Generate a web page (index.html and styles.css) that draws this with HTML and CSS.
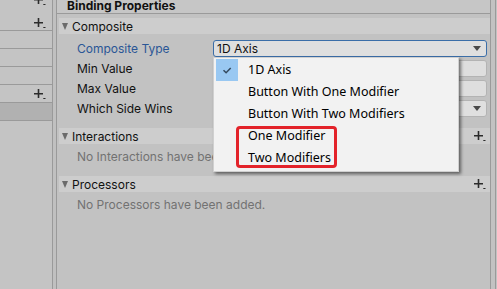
FILE: index.html
```html
<!DOCTYPE html>
<html>
<head>
<meta charset="utf-8">
<link rel="stylesheet" href="styles.css">
</head>
<body>
<div class="app">
  <div class="left">
    <div class="ltop">
      <svg class="plus plus-cut" viewBox="0 0 12 11"><path d="M0 4h9v1.6H0z M3.7 0h1.6v9H3.7z M9.3 9h2.2v1H9.3z" fill="#2b2b2b"/></svg>
      <svg class="plus plus-top" viewBox="0 0 12 11"><path d="M0 4h9v1.6H0z M3.7 0h1.6v9H3.7z M9.3 9h2.2v1H9.3z" fill="#2b2b2b"/></svg>
    </div>
    <div class="lrow"></div>
    <div class="lrow"></div>
    <div class="lrow"></div>
    <div class="lrow"><svg class="plus" viewBox="0 0 12 11"><path d="M0 4h9v1.6H0z M3.7 0h1.6v9H3.7z M9.3 9h2.2v1H9.3z" fill="#2b2b2b"/></svg></div>
    <div class="lrow sel"></div>
  </div>
  <div class="gap"></div>
  <div class="main">
    <div class="title">Binding Properties</div>

    <div class="fold fold-first">
      <span class="tri"></span><span class="fold-name">Composite</span>
    </div>
    <div class="fields">
      <div class="row">
        <span class="label active">Composite Type</span>
        <div class="field dropdown focused"><span>1D Axis</span><span class="arrow"></span></div>
      </div>
      <div class="row">
        <span class="label">Min Value</span>
        <div class="field"></div>
      </div>
      <div class="row">
        <span class="label">Max Value</span>
        <div class="field"></div>
      </div>
      <div class="row">
        <span class="label">Which Side Wins</span>
        <div class="field dropdown"><span></span><span class="arrow"></span></div>
      </div>
    </div>

    <div class="fold fold-sec">
      <span class="tri"></span><span class="fold-name">Interactions</span>
      <svg class="plus addbtn" viewBox="0 0 12 11"><path d="M0 4h9v1.6H0z M3.7 0h1.6v9H3.7z M9.3 9h2.2v1H9.3z" fill="#2b2b2b"/></svg>
    </div>
    <div class="empty">No Interactions have been added.</div>

    <div class="fold fold-sec2">
      <span class="tri"></span><span class="fold-name">Processors</span>
      <svg class="plus addbtn" viewBox="0 0 12 11"><path d="M0 4h9v1.6H0z M3.7 0h1.6v9H3.7z M9.3 9h2.2v1H9.3z" fill="#2b2b2b"/></svg>
    </div>
    <div class="empty">No Processors have been added.</div>
  </div>
  <div class="vbar"></div>
  <div class="edge"></div>

  <div class="menu">
    <div class="item checked">
      <span class="check"><svg viewBox="0 0 22 22"><path d="M7.5 11.2l2.6 2.6 4.6-4.8" fill="none" stroke="#34495e" stroke-width="1.5"/></svg></span>
      <span class="itext">1D Axis</span>
    </div>
    <div class="item"><span class="check"></span><span class="itext">Button With One Modifier</span></div>
    <div class="item"><span class="check"></span><span class="itext">Button With Two Modifiers</span></div>
    <div class="item"><span class="check"></span><span class="itext">One Modifier</span></div>
    <div class="item"><span class="check"></span><span class="itext">Two Modifiers</span></div>
  </div>
  <div class="highlight"></div>
</div>
</body>
</html>
```

FILE: styles.css
```css
* { box-sizing: border-box; }
html, body { margin: 0; padding: 0; }
body {
  width: 497px;
  height: 289px;
  overflow: hidden;
  background: #c2c2c2;
  font-family: Inter, "Noto Sans", sans-serif;
  font-size: 12px;
  color: #101010;
}
.app {
  position: relative;
  display: flex;
  height: 289px;
}
.left {
  width: 53px;
  border-right: 1px solid #9a9a9a;
  background: #c4c4c4;
  display: flex;
  flex-direction: column;
}
.ltop {
  height: 31px;
  border-bottom: 1px solid #9a9a9a;
  display: flex;
  flex-direction: column;
  align-items: flex-start;
  padding-left: 34px;
  overflow: hidden;
}
.plus { width: 12px; height: 11px; display: block; flex: none; }
.plus-cut { margin-top: -5px; }
.plus-top { margin-top: 12px; }
.lrow {
  height: 18px;
  border-bottom: 1px solid #9a9a9a;
  display: flex;
  align-items: center;
  padding-left: 34px;
  padding-top: 1px;
}
.lrow.sel { background: #b1b1b1; }
.gap {
  width: 3px;
  background: #c0c0c0;
}
.main {
  width: 435px;
  border-left: 1px solid #9a9a9a;
  border-right: 1px solid #9a9a9a;
  display: flex;
  flex-direction: column;
}
.title {
  height: 14px;
  border-bottom: 1px solid #9a9a9a;
  font-weight: 700;
  line-height: 12px;
  padding-left: 10px;
  background: #c6c6c6;
  color: #111;
}
.fold {
  height: 16px;
  margin: 0 0 0 2px;
  background: #cdcdcd;
  display: flex;
  align-items: center;
  padding-left: 3px;
}
.fold-first { margin-top: 4px; }
.fold-sec { margin-top: 10px; }
.fold-sec2 { margin-top: 9px; }
.tri {
  width: 0; height: 0;
  border-left: 3.5px solid transparent;
  border-right: 3.5px solid transparent;
  border-top: 7px solid #6b6b6b;
  margin-right: 4px;
  margin-top: 1px;
}
.fold-name { flex: 1; color: #111; }
.addbtn { margin-right: 4px; margin-top: 1px; }
.fields { padding-top: 4px; }
.row {
  height: 20px;
  display: flex;
  align-items: center;
  padding-left: 20px;
}
.label { width: 136px; flex: none; color: #111; }
.label.active { color: #2a5696; }
.field {
  flex: 1;
  margin-right: 3px;
  height: 17px;
  background: #dedede;
  border: 1px solid #b3b3b3;
  border-radius: 3px;
}
.dropdown {
  display: flex;
  align-items: center;
  justify-content: space-between;
  padding: 0 5px 0 3px;
  background: #dfdfdf;
}
.dropdown.focused { border-color: #3b6ea8; }
.arrow {
  width: 0; height: 0;
  border-left: 4px solid transparent;
  border-right: 4px solid transparent;
  border-top: 5px solid #4a4a4a;
}
.empty {
  height: 20px;
  margin-top: 3px;
  padding-left: 20px;
  line-height: 20px;
  color: #727272;
}
.vbar {
  width: 5px;
  border-right: 1px solid #9a9a9a;
}
.edge { width: 1px; background: #c2c2c2; }

.menu {
  position: absolute;
  left: 213px;
  top: 57px;
  width: 246px;
  height: 115px;
  background: #f2f2f2;
  border: 1px solid #d0d0d0;
  box-shadow: 2px 2px 3px rgba(0, 0, 0, 0.5);
  padding: 1px 0 0 2px;
  font-family: "Noto Sans", sans-serif;
  font-size: 12.5px;
  color: #000;
}
.item {
  height: 22px;
  display: flex;
  align-items: center;
}
.check {
  width: 22px;
  height: 22px;
  flex: none;
  margin-right: 10px;
}
.check svg { display: block; width: 22px; height: 22px; }
.item.checked .check { background: #99c8f2; }
.itext { line-height: 22px; }
.highlight {
  position: absolute;
  left: 236px;
  top: 126px;
  width: 101px;
  height: 42px;
  border: 3px solid #e3232a;
  border-radius: 4px;
}
```
